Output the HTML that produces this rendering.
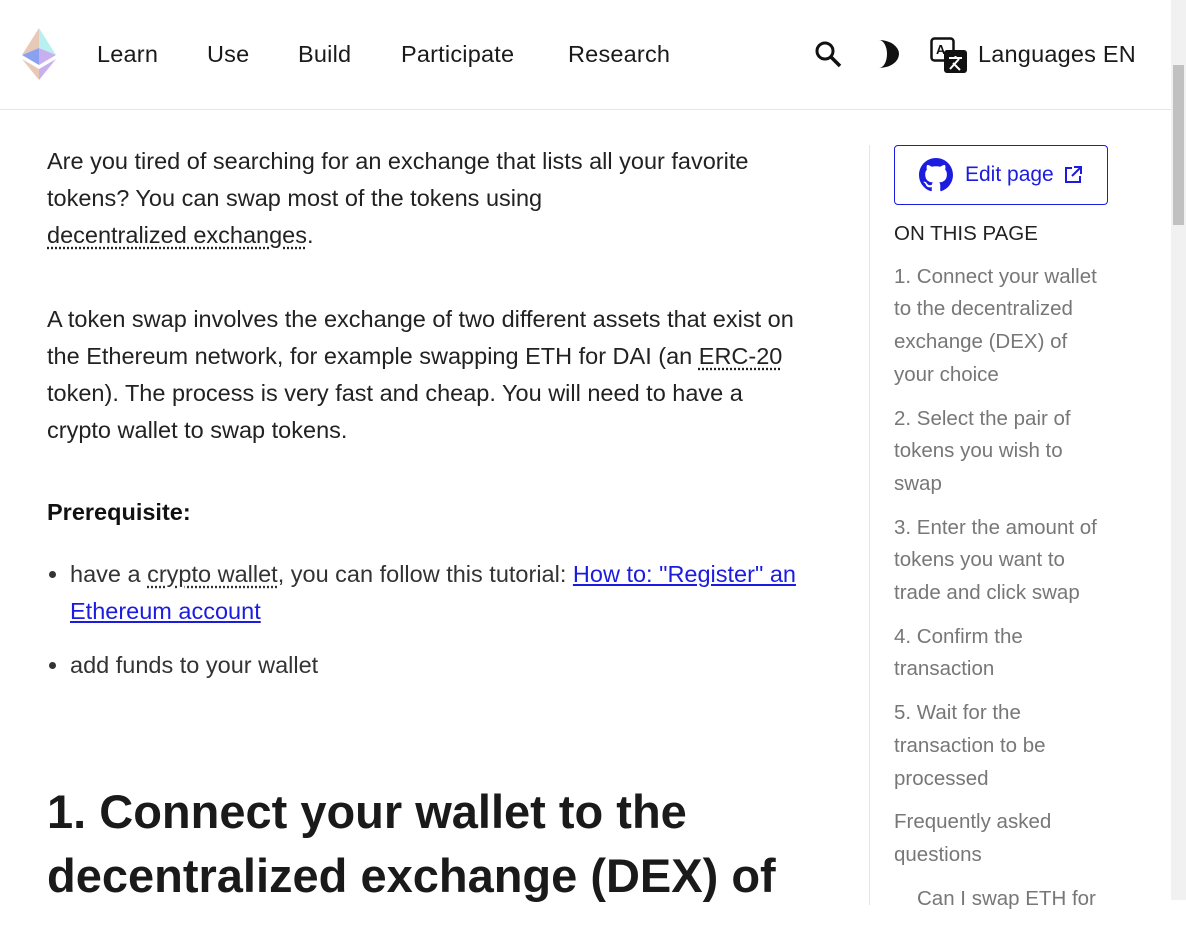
<!DOCTYPE html>
<html><head><meta charset="utf-8"><style>
*{margin:0;padding:0;box-sizing:border-box}
body{width:1186px;height:900px;overflow:hidden;background:#fff;font-family:"Liberation Sans",sans-serif;color:#222;position:relative}
.nav{position:absolute;left:0;top:0;width:1171px;height:110px;border-bottom:1px solid #e5e5e5}
.nav a{position:absolute;top:41px;font-size:23.5px;color:#1a1a1a;text-decoration:none;letter-spacing:0.2px}
.sb{position:absolute;left:1171px;top:0;width:15px;height:900px;background:#f1f1f1}
.thumb{position:absolute;left:1173px;top:65px;width:11px;height:160px;background:#c1c1c1}
.main{position:absolute;left:47px;top:143px;width:820px;font-size:23.5px;line-height:37px;color:#222;white-space:nowrap}
.main p{margin-bottom:47px}
.du{text-decoration:underline dotted;text-underline-offset:4px}
a.l{color:#1c1ce1;text-decoration:underline}
ul{padding-left:23px;color:#333}
li{margin-bottom:17px}
h1{font-size:47px;line-height:64px;font-weight:bold;color:#1a1a1a;margin-top:96px}
.side{position:absolute;left:869px;top:145px;height:760px;border-left:1px solid #e5e5e5}
.edit{position:absolute;left:894px;top:145px;width:214px;height:60px;border:1px solid #1c1ce1;border-radius:4px;color:#1c1ce1;font-size:21px}
.toc{position:absolute;left:894px;top:218px;width:240px;font-size:20.5px;line-height:32.7px;color:#777;white-space:nowrap}
.toc div{margin-bottom:11px}
</style></head><body>
<div class="nav">
<svg style="position:absolute;left:22px;top:28px" width="34" height="52" viewBox="0 0 34 52"><polygon points="17,0 0,27 17,20" fill="#e8c9b8"/><polygon points="17,0 34,27 17,20" fill="#b8f0ef"/><polygon points="0,27 17,20 17,37" fill="#8aa0f0"/><polygon points="34,27 17,20 17,37" fill="#c8b0f0"/><polygon points="0,31 17,41 17,52" fill="#e8c9b8"/><polygon points="34,31 17,41 17,52" fill="#c8b0f0"/></svg>
<a style="left:97px">Learn</a><a style="left:207px">Use</a><a style="left:298px">Build</a><a style="left:401px">Participate</a><a style="left:568px">Research</a>
<svg style="position:absolute;left:814px;top:40px" width="28" height="28" viewBox="0 0 28 28"><circle cx="11" cy="11" r="8" fill="none" stroke="#111" stroke-width="3"/><line x1="17" y1="17" x2="26" y2="26" stroke="#111" stroke-width="3.5"/></svg>
<svg style="position:absolute;left:876px;top:40px" width="26" height="30" viewBox="0 0 26 30"><path d="M3 0 A20 14 0 0 1 3 28 A8 14 0 0 0 3 0Z" fill="#111"/></svg>
<svg style="position:absolute;left:930px;top:37px" width="38" height="36" viewBox="0 0 38 36"><rect x="1.5" y="1.5" width="22" height="22" rx="3" fill="#fff" stroke="#111" stroke-width="2.5"/><text x="6" y="17" font-size="13" font-weight="bold" font-family="Liberation Sans" fill="#111">A</text><rect x="14" y="13" width="23" height="23" rx="3" fill="#111"/><path d="M19 21h13M25.5 19v2M20 32l9-10M23 26l7 7" stroke="#fff" stroke-width="2" fill="none"/></svg>
<a style="left:978px">Languages EN</a>
</div>
<div class="sb"></div><div class="thumb"></div>
<div class="main">
<p>Are you tired of searching for an exchange that lists all your favorite<br>tokens? You can swap most of the tokens using<br><span class="du">decentralized exchanges</span>.</p>
<p style="margin-bottom:45px">A token swap involves the exchange of two different assets that exist on<br>the Ethereum network, for example swapping ETH for DAI (an <span class="du">ERC-20</span><br>token). The process is very fast and cheap. You will need to have a<br>crypto wallet to swap tokens.</p>
<p style="margin-bottom:25px"><b style="color:#111">Prerequisite:</b></p>
<ul><li>have a <span class="du">crypto wallet</span>, you can follow this tutorial: <a class="l">How to: "Register" an<br>Ethereum account</a></li><li>add funds to your wallet</li></ul>
<h1>1. Connect your wallet to the<br>decentralized exchange (DEX) of</h1>
</div>
<div class="side"></div>
<div class="edit"><svg style="position:absolute;left:24px;top:12px" width="34" height="34" viewBox="0 0 16 16"><path fill="#1c1ce1" d="M8 0C3.58 0 0 3.58 0 8c0 3.54 2.290 6.530 5.470 7.590.4.07.55-.17.55-.38 0-.19-.01-.82-.01-1.49-2.01.37-2.53-.49-2.69-.94-.09-.23-.48-.94-.82-1.130-.28-.15-.68-.52-.01-.53.63-.01 1.080.58 1.230.82.72 1.210 1.870.87 2.330.66.07-.52.28-.87.51-1.070-1.780-.2-3.640-.89-3.640-3.950 0-.87.31-1.590.82-2.150-.08-.2-.36-1.020.08-2.120 0 0 .67-.21 2.2.82.64-.18 1.320-.27 2-.27.68 0 1.360.09 2 .27 1.530-1.040 2.2-.82 2.2-.82.44 1.1.16 1.920.08 2.120.51.56.82 1.270.82 2.150 0 3.070-1.870 3.750-3.650 3.950.29.25.54.73.54 1.480 0 1.070-.01 1.930-.01 2.2 0 .21.15.46.55.38A8.013 8.013 0 0016 8c0-4.42-3.58-8-8-8z"/></svg><span style="position:absolute;left:70px;top:17px">Edit page</span><svg style="position:absolute;left:168px;top:19px" width="20" height="20" viewBox="0 0 20 20"><path d="M9 3H3v14h14v-6M11 2h7v7M18 2 9 11" stroke="#1c1ce1" stroke-width="2" fill="none"/></svg></div>
<div class="toc"><div style="color:#222;margin-bottom:10px">ON THIS PAGE</div>
<div>1. Connect your wallet<br>to the decentralized<br>exchange (DEX) of<br>your choice</div>
<div>2. Select the pair of<br>tokens you wish to<br>swap</div>
<div>3. Enter the amount of<br>tokens you want to<br>trade and click swap</div>
<div>4. Confirm the<br>transaction</div>
<div>5. Wait for the<br>transaction to be<br>processed</div>
<div>Frequently asked<br>questions</div>
<div style="padding-left:23px">Can I swap ETH for</div>
</div>
</body></html>
